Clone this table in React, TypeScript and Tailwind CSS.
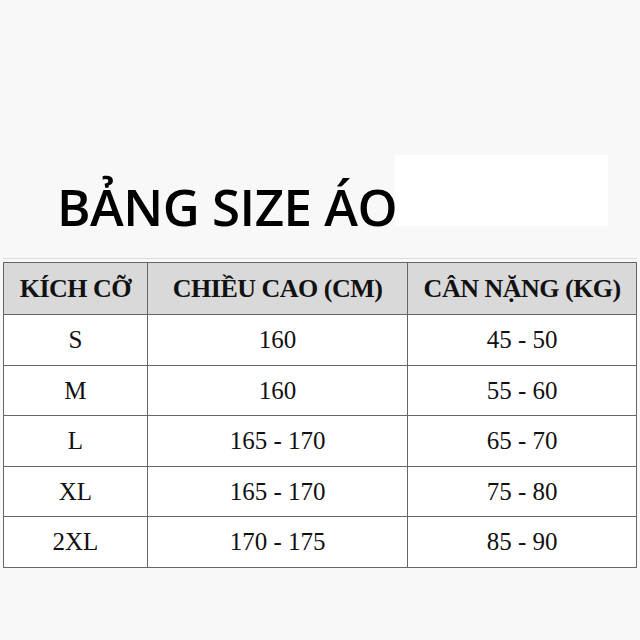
const rows = [
  ['S', '160', '45 - 50'],
  ['M', '160', '55 - 60'],
  ['L', '165 - 170', '65 - 70'],
  ['XL', '165 - 170', '75 - 80'],
  ['2XL', '170 - 175', '85 - 90'],
];

export default function App() {
  return (
    <div className="w-[640px] h-[640px] bg-[#f8f8f8] overflow-hidden">
      <div className="flex items-end pt-[155px] pl-[57px] h-[226px]">
        <h1 className="w-[338px] shrink-0 whitespace-nowrap text-[51px] leading-none font-semibold tracking-[-0.5px] text-black font-['Open_Sans',sans-serif] mb-[-6px]">
          BẢNG SIZE ÁO
        </h1>
        <div className="shrink-0 w-[213px] h-[71px] bg-white" />
      </div>

      <div className="mt-[32px] ml-[3px] w-[634px] border-t border-[#dcdce4] pt-[3px]">
        <table className="w-full border-collapse font-['Liberation_Serif',serif] text-[#111]">
          <colgroup>
            <col className="w-[144px]" />
            <col className="w-[261px]" />
            <col className="w-[229px]" />
          </colgroup>
          <thead>
            <tr className="bg-[#d9d9d9] h-[52px]">
              <th className="border border-[#666] text-[26px] font-bold tracking-[-0.5px]">KÍCH CỠ</th>
              <th className="border border-[#666] text-[26px] font-bold tracking-[-0.5px]">CHIỀU CAO (CM)</th>
              <th className="border border-[#666] text-[26px] font-bold tracking-[-0.5px]">CÂN NẶNG (KG)</th>
            </tr>
          </thead>
          <tbody>
            {rows.map(r => (
              <tr key={r[0]} className="bg-white h-[50.5px]">
                {r.map((c, i) => (
                  <td key={i} className="border border-[#666] text-center text-[25px]">{c}</td>
                ))}
              </tr>
            ))}
          </tbody>
        </table>
      </div>
    </div>
  );
}
